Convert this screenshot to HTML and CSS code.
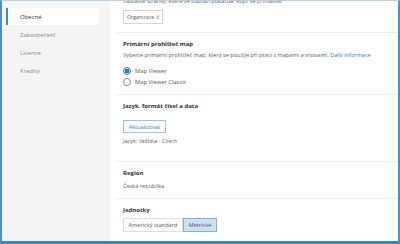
FILE: index.html
```html
<!DOCTYPE html>
<html lang="cs">
<head>
    <meta charset="UTF-8">
    <title>Nastavení organizace</title>
    <link rel="stylesheet" href="styles.css">
</head>
<body>
    <div class="window">
        <nav class="sidebar">
            <a class="nav-item active">Obecné</a>
            <a class="nav-item">Zabezpečení</a>
            <a class="nav-item">Licence</a>
            <a class="nav-item">Kredity</a>
        </nav>

        <main class="content">
            <section class="section first">
                <p class="desc cut">nastavte stránky, které se zobrazí pokaždé, když se přihlásíte.</p>
                <div class="select">Organizace <span class="arrows">⇕</span></div>
            </section>

            <section class="section">
                <h3>Primární prohlížeč map</h3>
                <p class="desc">Vyberte primární prohlížeč map, který se použije při práci s mapami a vrstvami. <a class="link">Další informace</a></p>
                <div class="radios">
                    <label class="radio"><span class="dot checked"></span>Map Viewer</label>
                    <label class="radio"><span class="dot"></span>Map Viewer Classic</label>
                </div>
            </section>

            <section class="section lang">
                <h3>Jazyk, formát čísel a data</h3>
                <button class="btn">Aktualizovat</button>
                <p class="desc value">Jazyk: čeština - Czech</p>
            </section>

            <section class="section region">
                <h3>Region</h3>
                <p class="desc value">Česká republika</p>
            </section>

            <section class="section last">
                <h3>Jednotky</h3>
                <div class="segmented">
                    <span class="seg">Americký standard</span>
                    <span class="seg on">Metrické</span>
                </div>
            </section>
        </main>
    </div>
</body>
</html>
```

FILE: styles.css
```css
* {
    margin: 0;
    padding: 0;
    box-sizing: border-box;
    font-family: 'Open Sans', 'DejaVu Sans', sans-serif;
}

body {
    width: 400px;
    height: 244px;
    overflow: hidden;
    background: #fff;
    color: #4c4c4c;
}

.window {
    height: 244px;
    display: flex;
    border-top: 1px solid #b5cfe8;
    border-left: 2px solid #4a8fd0;
    border-right: 2px solid #4a8fd0;
    border-bottom: 3px solid #3c84c8;
    overflow: hidden;
}

/* Sidebar */
.sidebar {
    width: 108px;
    flex-shrink: 0;
    background: #f4f4f4;
    padding: 7px 11px 0 4px;
    display: flex;
    flex-direction: column;
}

.nav-item {
    height: 18px;
    display: flex;
    align-items: center;
    padding-left: 14px;
    font-size: 6px;
    color: #8a8a8a;
}

.nav-item.active {
    height: 17px;
    margin-bottom: 1px;
    background: #fff;
    color: #333;
    border-left: 2px solid #4a86bf;
    padding-left: 12px;
}

/* Main content */
.content {
    flex: 1;
    padding: 0 0 0 6px;
    overflow: hidden;
}

.section {
    border-bottom: 1px solid #ececec;
    padding: 7px 0 8px 7px;
}

.section.first {
    margin-top: -4px;
    padding-top: 0;
    padding-bottom: 8px;
}

.section.lang {
    padding-bottom: 15px;
}

.section.lang .btn {
    margin-top: 9px;
}

.section.lang .value {
    margin-top: 4px;
}

.section.region {
    padding-bottom: 7px;
}

.section.region .value {
    margin-top: 4px;
}

.section.last {
    border-bottom: none;
}

h3 {
    font-size: 6px;
    font-weight: 700;
    color: #323232;
    line-height: 9px;
    margin-bottom: 2px;
}

.desc {
    font-size: 5.6px;
    line-height: 9px;
    color: #595959;
    white-space: nowrap;
}

.desc.cut {
    margin-bottom: 4px;
}

.link {
    color: #2f77b6;
}

.select {
    width: 40px;
    height: 14px;
    border: 1px solid #d4d4d4;
    display: flex;
    align-items: center;
    justify-content: space-between;
    padding: 0 2px 0 3px;
    font-size: 5.2px;
    color: #555;
}

.arrows {
    font-size: 5px;
    color: #777;
}

.radios {
    margin-top: 6px;
    display: flex;
    flex-direction: column;
    gap: 2px;
}

.radio {
    display: flex;
    align-items: center;
    gap: 4px;
    font-size: 5.8px;
    color: #555;
    height: 9px;
}

.dot {
    width: 8px;
    height: 8px;
    border: 1px solid #8a8a8a;
    border-radius: 50%;
    background: #fff;
}

.dot.checked {
    border-color: #2f77b6;
    background: radial-gradient(circle, #2f77b6 0 2.3px, #fff 2.6px);
}

.btn {
    display: block;
    width: 43px;
    height: 13px;
    background: #fff;
    border: 1px solid #9fc3e2;
    color: #2f77b6;
    font-size: 5.6px;
}

.segmented {
    display: flex;
    margin-top: 3px;
}

.seg {
    height: 14px;
    display: flex;
    align-items: center;
    padding: 0 4px;
    font-size: 5.6px;
    color: #555;
    border: 1px solid #dedede;
    width: 60px;
    justify-content: center;
}

.seg.on {
    width: 34px;
    background: #cce2f4;
    border-color: #7fb0d9;
}
```
